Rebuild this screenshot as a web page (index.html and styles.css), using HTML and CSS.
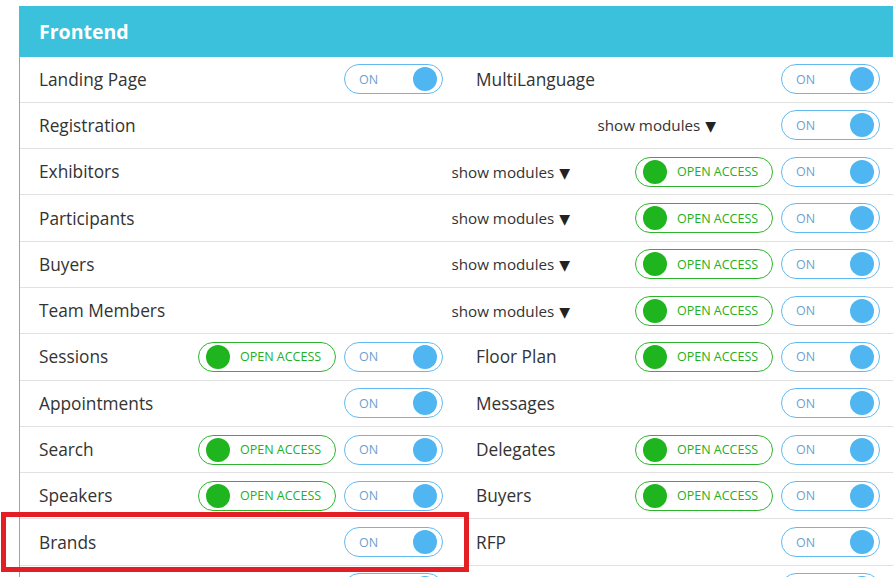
FILE: index.html
```html
<!DOCTYPE html>
<html lang="en">
<head>
<meta charset="utf-8">
<title>Frontend modules</title>
<link rel="stylesheet" href="styles.css">
</head>
<body>
<div class="page">
  <section class="panel">
    <div class="panel-head">Frontend</div>

    <div class="row split">
      <div class="cell"><span class="label">Landing Page</span><div class="controls"><span class="toggle"><span class="ttxt">ON</span><span class="knob"></span></span></div></div>
      <div class="cell"><span class="label">MultiLanguage</span><div class="controls"><span class="toggle"><span class="ttxt">ON</span><span class="knob"></span></span></div></div>
    </div>

    <div class="row full">
      <span class="label">Registration</span>
      <div class="controls"><span class="modules">show modules <span class="caret">▼</span></span><span class="toggle"><span class="ttxt">ON</span><span class="knob"></span></span></div>
    </div>

    <div class="row full">
      <span class="label">Exhibitors</span>
      <div class="controls"><span class="modules">show modules <span class="caret">▼</span></span><span class="access"><span class="gknob"></span><span class="atxt">OPEN ACCESS</span></span><span class="toggle"><span class="ttxt">ON</span><span class="knob"></span></span></div>
    </div>

    <div class="row full">
      <span class="label">Participants</span>
      <div class="controls"><span class="modules">show modules <span class="caret">▼</span></span><span class="access"><span class="gknob"></span><span class="atxt">OPEN ACCESS</span></span><span class="toggle"><span class="ttxt">ON</span><span class="knob"></span></span></div>
    </div>

    <div class="row full">
      <span class="label">Buyers</span>
      <div class="controls"><span class="modules">show modules <span class="caret">▼</span></span><span class="access"><span class="gknob"></span><span class="atxt">OPEN ACCESS</span></span><span class="toggle"><span class="ttxt">ON</span><span class="knob"></span></span></div>
    </div>

    <div class="row full">
      <span class="label">Team Members</span>
      <div class="controls"><span class="modules">show modules <span class="caret">▼</span></span><span class="access"><span class="gknob"></span><span class="atxt">OPEN ACCESS</span></span><span class="toggle"><span class="ttxt">ON</span><span class="knob"></span></span></div>
    </div>

    <div class="row split">
      <div class="cell"><span class="label">Sessions</span><div class="controls"><span class="access"><span class="gknob"></span><span class="atxt">OPEN ACCESS</span></span><span class="toggle"><span class="ttxt">ON</span><span class="knob"></span></span></div></div>
      <div class="cell"><span class="label">Floor Plan</span><div class="controls"><span class="access"><span class="gknob"></span><span class="atxt">OPEN ACCESS</span></span><span class="toggle"><span class="ttxt">ON</span><span class="knob"></span></span></div></div>
    </div>

    <div class="row split">
      <div class="cell"><span class="label">Appointments</span><div class="controls"><span class="toggle"><span class="ttxt">ON</span><span class="knob"></span></span></div></div>
      <div class="cell"><span class="label">Messages</span><div class="controls"><span class="toggle"><span class="ttxt">ON</span><span class="knob"></span></span></div></div>
    </div>

    <div class="row split">
      <div class="cell"><span class="label">Search</span><div class="controls"><span class="access"><span class="gknob"></span><span class="atxt">OPEN ACCESS</span></span><span class="toggle"><span class="ttxt">ON</span><span class="knob"></span></span></div></div>
      <div class="cell"><span class="label">Delegates</span><div class="controls"><span class="access"><span class="gknob"></span><span class="atxt">OPEN ACCESS</span></span><span class="toggle"><span class="ttxt">ON</span><span class="knob"></span></span></div></div>
    </div>

    <div class="row split">
      <div class="cell"><span class="label">Speakers</span><div class="controls"><span class="access"><span class="gknob"></span><span class="atxt">OPEN ACCESS</span></span><span class="toggle"><span class="ttxt">ON</span><span class="knob"></span></span></div></div>
      <div class="cell"><span class="label">Buyers</span><div class="controls"><span class="access"><span class="gknob"></span><span class="atxt">OPEN ACCESS</span></span><span class="toggle"><span class="ttxt">ON</span><span class="knob"></span></span></div></div>
    </div>

    <div class="row split">
      <div class="cell"><span class="label">Brands</span><div class="controls"><span class="toggle"><span class="ttxt">ON</span><span class="knob"></span></span></div></div>
      <div class="cell"><span class="label">RFP</span><div class="controls"><span class="toggle"><span class="ttxt">ON</span><span class="knob"></span></span></div></div>
    </div>

    <div class="row split">
      <div class="cell"><span class="label"></span><div class="controls"><span class="toggle"><span class="ttxt"></span><span class="knob"></span></span></div></div>
      <div class="cell"><span class="label"></span><div class="controls"><span class="toggle"><span class="ttxt"></span><span class="knob"></span></span></div></div>
    </div>
  </section>
  <div class="highlight"></div>
</div>
</body>
</html>
```

FILE: styles.css
```css
html, body {
  margin: 0;
  padding: 0;
  overflow: hidden;
  background: #ffffff;
}

body {
  font-family: "Open Sans", "Liberation Sans", sans-serif;
  color: #333333;
}

.page {
  position: relative;
  padding: 6px 0 0 19px;
}

.panel {
  width: 875px;
  box-sizing: border-box;
  border-left: 1px solid #4cc3de;
}

.panel-head {
  height: 50.5px;
  box-sizing: border-box;
  background: #3bc1dc;
  color: #ffffff;
  font-weight: 700;
  font-size: 19.5px;
  display: flex;
  align-items: center;
  margin-left: -1px;
  padding-left: 20px;
}

.row {
  height: 46.3px;
  box-sizing: border-box;
  border-bottom: 1px solid #e1e1e1;
}

.row.split {
  display: grid;
  grid-template-columns: 436px 1fr;
}

.cell, .row.full {
  display: flex;
  align-items: center;
  justify-content: space-between;
}

.cell:first-child {
  padding: 0 13px 0 19px;
}

.cell:last-child {
  padding: 0 14px 0 20px;
}

.row.full {
  padding: 0 14px 0 19px;
}

.label {
  font-size: 17.3px;
  color: #333333;
  white-space: nowrap;
}

.controls {
  display: flex;
  align-items: center;
  gap: 8px;
}

.modules {
  font-size: 15.2px;
  color: #333333;
  margin-right: 57px;
  white-space: nowrap;
}

.caret {
  font-family: "DejaVu Sans", sans-serif;
  font-size: 14px;
  color: #222222;
  margin-left: 1px;
}

.toggle {
  width: 99px;
  height: 30px;
  box-sizing: border-box;
  border: 1px solid #62b9ef;
  border-radius: 15px;
  display: flex;
  align-items: center;
  justify-content: space-between;
  padding: 0 5px 0 14px;
}

.ttxt {
  font-size: 12.5px;
  color: #6e9fcf;
}

.knob {
  width: 24px;
  height: 24px;
  border-radius: 50%;
  background: #4fb6f1;
}

.access {
  width: 138px;
  height: 30px;
  box-sizing: border-box;
  border: 1px solid #2eb52e;
  border-radius: 15px;
  display: flex;
  align-items: center;
  gap: 10px;
  padding: 0 0 0 7px;
}

.gknob {
  width: 24px;
  height: 24px;
  border-radius: 50%;
  background: #1fb51f;
}

.atxt {
  font-size: 12.5px;
  color: #21b021;
  white-space: nowrap;
}

.highlight {
  position: absolute;
  left: 1px;
  top: 512px;
  width: 468px;
  height: 60px;
  box-sizing: border-box;
  border: 5px solid #e31e24;
}
```
